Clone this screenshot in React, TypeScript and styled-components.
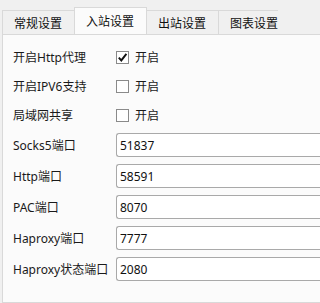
import styled, { createGlobalStyle } from 'styled-components'

const GlobalStyle = createGlobalStyle`
  html, body {
    margin: 0;
    padding: 0;
    overflow: hidden;
    background: #f0f0f0;
  }
  body {
    font-family: "Noto Sans", "Noto Sans CJK SC", sans-serif;
    font-size: 12px;
    color: #1a1a1a;
  }
`

const tabs = ['常规设置', '入站设置', '出站设置', '图表设置']

const checkRows = [
  { label: '开启Http代理', checked: true },
  { label: '开启IPV6支持', checked: false },
  { label: '局域网共享', checked: false },
]

const portRows = [
  { label: 'Socks5端口', value: '51837' },
  { label: 'Http端口', value: '58591' },
  { label: 'PAC端口', value: '8070' },
  { label: 'Haproxy端口', value: '7777' },
  { label: 'Haproxy状态端口', value: '2080' },
]

function App () {
  return (
    <StyledPage>
      <GlobalStyle />
      <TabBar>
        {tabs.map((t, i) => (
          <Tab key={t} $active={i === 1}>{t}</Tab>
        ))}
      </TabBar>
      <Panel>
        <Form>
          {checkRows.map(({ label, checked }) => (
            <Row key={label} $h={22}>
              <Label>{label}</Label>
              <CheckField>
                <Box>
                  {checked && (
                    <svg width="11" height="11" viewBox="0 0 11 11">
                      <path d="M1.8 5.6 L4.3 8.4 L9.4 1.8" fill="none" stroke="#111" strokeWidth="1.9" />
                    </svg>
                  )}
                </Box>
                <span>开启</span>
              </CheckField>
            </Row>
          ))}
          {portRows.map(({ label, value }) => (
            <Row key={label} $h={24}>
              <Label>{label}</Label>
              <Input defaultValue={value} />
            </Row>
          ))}
        </Form>
      </Panel>
    </StyledPage>
  )
}

const StyledPage = styled.div`
  box-sizing: border-box;
  width: 100vw;
  height: 100vh;
  overflow: hidden;
  padding: 7px 0 0 2px;
  display: flex;
  flex-direction: column;
`

const TabBar = styled.div`
  display: flex;
  align-items: flex-end;
  height: 27px;
  flex: none;
  overflow: hidden;
`

const Tab = styled.div<{ $active?: boolean }>`
  display: flex;
  align-items: center;
  flex: none;
  box-sizing: border-box;
  height: ${p => (p.$active ? '28px' : '24px')};
  padding: ${p => (p.$active ? '0 12px 2px 11px' : '0 12px 0 11px')};
  margin-left: -1px;
  margin-bottom: ${p => (p.$active ? '-1px' : '0')};
  border: 1px solid #d9d9d9;
  border-bottom: none;
  background: ${p => (p.$active ? '#fbfbfb' : '#f0f0f0')};
  position: relative;
  z-index: ${p => (p.$active ? 1 : 0)};
  white-space: nowrap;
  color: #111;

  &:first-child {
    margin-left: 0;
  }

  &:last-child {
    flex: 0 1 auto;
    min-width: 0;
    overflow: hidden;
    border-right: none;
    padding-right: 0;
  }
`

const Panel = styled.div`
  flex: 1;
  border: 1px solid #d9d9d9;
  border-right: none;
  background: #fbfbfb;
  padding: 11px 0 0 10px;
  overflow: hidden;
`

const Form = styled.div`
  display: flex;
  flex-direction: column;
  gap: 7px;
`

const Row = styled.div<{ $h: number }>`
  display: grid;
  grid-template-columns: 103px 1fr;
  align-items: center;
  height: ${p => p.$h}px;
`

const Label = styled.div`
  white-space: nowrap;
`

const CheckField = styled.div`
  display: flex;
  align-items: center;
  gap: 6px;
`

const Box = styled.div`
  width: 13px;
  height: 13px;
  box-sizing: border-box;
  border: 1px solid #8a8a8a;
  background: #fff;
  display: flex;
  align-items: center;
  justify-content: center;
`

/* the field runs on past the window's right edge, so only its left side shows */
const Input = styled.input`
  box-sizing: border-box;
  height: 24px;
  width: 100%;
  min-width: 0;
  border: 1px solid #a9a9a9;
  border-right: none;
  border-radius: 3px 0 0 3px;
  background: #fff;
  padding: 0 3px;
  font: inherit;
  color: #111;
  outline: none;
`

export default App
